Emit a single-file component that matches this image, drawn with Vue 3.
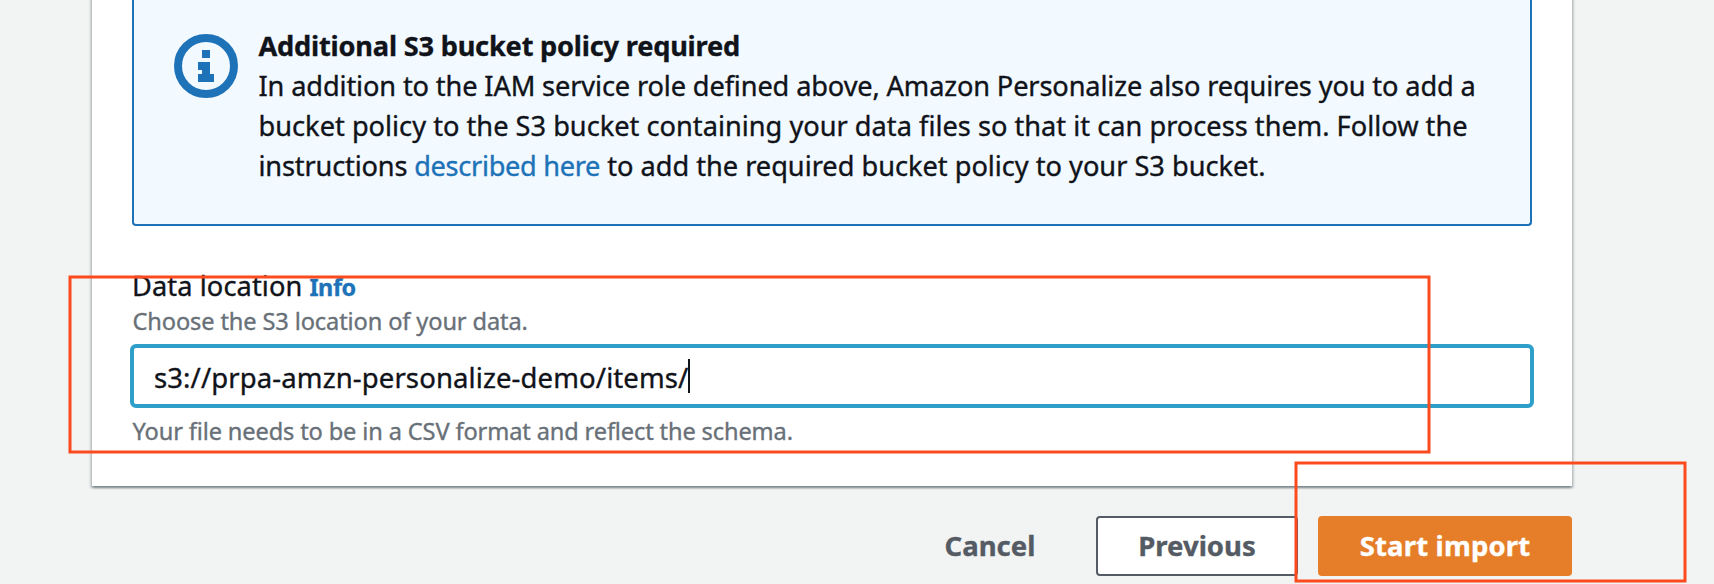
<script setup>
import { ref } from 'vue'

const location = ref('s3://prpa-amzn-personalize-demo/items/')
</script>

<template>
  <main class="page">
    <section class="card">
      <div class="alert">
        <svg class="info-icon" viewBox="0 0 64 64" width="64" height="64" aria-hidden="true">
          <circle cx="32" cy="32" r="28" fill="none" stroke="#1d72b8" stroke-width="8" />
          <path fill="#1d72b8" d="M28 16h8v8h-8zM24 28h12v12h4v8H24v-8h4v-4h-4z" />
        </svg>
        <div class="alert-text">
          <strong class="title">Additional S3 bucket policy required</strong>
          <span class="l1">In addition to the IAM service role defined above, Amazon Personalize also requires you to add a</span>
          <span class="l2">bucket policy to the S3 bucket containing your data files so that it can process them. Follow the</span>
          <span class="l3"><span class="lead">instructions </span><a class="link">described here</a> to add the required bucket policy to your S3 bucket.</span>
        </div>
      </div>
      <div class="field">
        <div class="label"><span>Data location</span><a class="info">Info</a></div>
        <div class="hint">Choose the S3 location of your data.</div>
        <div class="input"><span class="value">{{ location }}</span><i class="caret"></i></div>
        <div class="hint constraint">Your file needs to be in a CSV format and reflect the schema.</div>
      </div>
    </section>
    <footer class="actions">
      <button class="btn cancel">Cancel</button>
      <button class="btn previous">Previous</button>
      <button class="btn primary">Start import</button>
    </footer>
    <svg class="marks" viewBox="0 0 1714 584" width="1714" height="584" fill="none" stroke="#fb4b1e" stroke-width="3" aria-hidden="true">
      <rect x="70" y="277" width="1359" height="175" />
      <rect x="1296" y="463" width="389" height="118" />
    </svg>
  </main>
</template>

<style>
body {
  margin: 0;
}
</style>

<style scoped>
.page {
  position: relative;
  box-sizing: border-box;
  display: flex;
  flex-direction: column;
  width: 1714px;
  height: 584px;
  padding: 0 142px 0 92px;
  overflow: hidden;
  background: #f2f3f3;
  color: #101319;
  font-family: "Noto Sans", "Open Sans", sans-serif;
  font-size: 27.2px;
  -webkit-text-stroke-width: 0.35px;
}
.card {
  box-sizing: border-box;
  height: 506px;
  margin-top: -20px;
  padding: 20px 40px 0;
  background: #fff;
  box-shadow: 0 2px 2px rgba(0, 28, 36, 0.3), 2px 2px 2px rgba(0, 28, 36, 0.15), -2px 2px 2px rgba(0, 28, 36, 0.15);
}
.alert {
  box-sizing: border-box;
  display: flex;
  height: 226px;
  padding: 26px 40px 38px;
  border: 2px solid #1d72b8;
  border-top: 0;
  border-radius: 0 0 4px 4px;
  background: #f2f9ff;
}
.info-icon {
  flex: none;
  margin: 8px 20.5px 0 0;
}
.alert-text {
  display: flex;
  flex-direction: column;
  line-height: 40px;
  white-space: nowrap;
}
.title {
  font-weight: 700;
  letter-spacing: -0.2px;
}
.l1 {
  letter-spacing: -0.13px;
}
.l2 {
  letter-spacing: 0.01px;
}
.l3 {
  letter-spacing: -0.01px;
}
.lead {
  letter-spacing: -0.17px;
}
.link,
.info {
  color: #1d72b8;
}
.link {
  letter-spacing: -0.32px;
}
.field {
  margin-top: 42px;
  white-space: nowrap;
}
.label {
  display: flex;
  align-items: baseline;
  gap: 7px;
  height: 37px;
  line-height: 36px;
  letter-spacing: 0.1px;
}
.info {
  font-size: 23.4px;
  font-weight: 700;
  letter-spacing: -0.4px;
}
.hint {
  height: 32px;
  padding-left: 0.5px;
  color: #687078;
  font-size: 23.6px;
  line-height: 32px;
  letter-spacing: -0.12px;
}
.input {
  box-sizing: border-box;
  display: flex;
  align-items: center;
  height: 64px;
  margin: 7px -2px 7px;
  padding: 0 20px;
  border: 4px solid #2e9fc9;
  border-radius: 6px;
  background: #fff;
  font-size: 27.5px;
  letter-spacing: 0.11px;
}
.value {
  padding-top: 2px;
}
.caret {
  width: 2px;
  height: 34px;
  background: #101319;
}
.constraint {
  letter-spacing: -0.13px;
}
.actions {
  display: flex;
  justify-content: flex-end;
  margin-top: 30px;
}
.btn {
  box-sizing: border-box;
  height: 60px;
  padding: 0;
  border: 2px solid transparent;
  border-radius: 4px;
  background: none;
  color: #545b64;
  font-family: inherit;
  font-size: 27.5px;
  font-weight: 700;
  line-height: 56px;
}
.cancel {
  width: 172px;
  margin-right: 20px;
}
.previous {
  width: 202px;
  margin-right: 20px;
  border-color: #545b64;
  background: #fff;
}
.primary {
  width: 254px;
  border-color: #e67e29;
  background: #e67e29;
  color: #fff;
  letter-spacing: 0.15px;
}
.marks {
  position: absolute;
  top: 0;
  left: 0;
}
</style>
